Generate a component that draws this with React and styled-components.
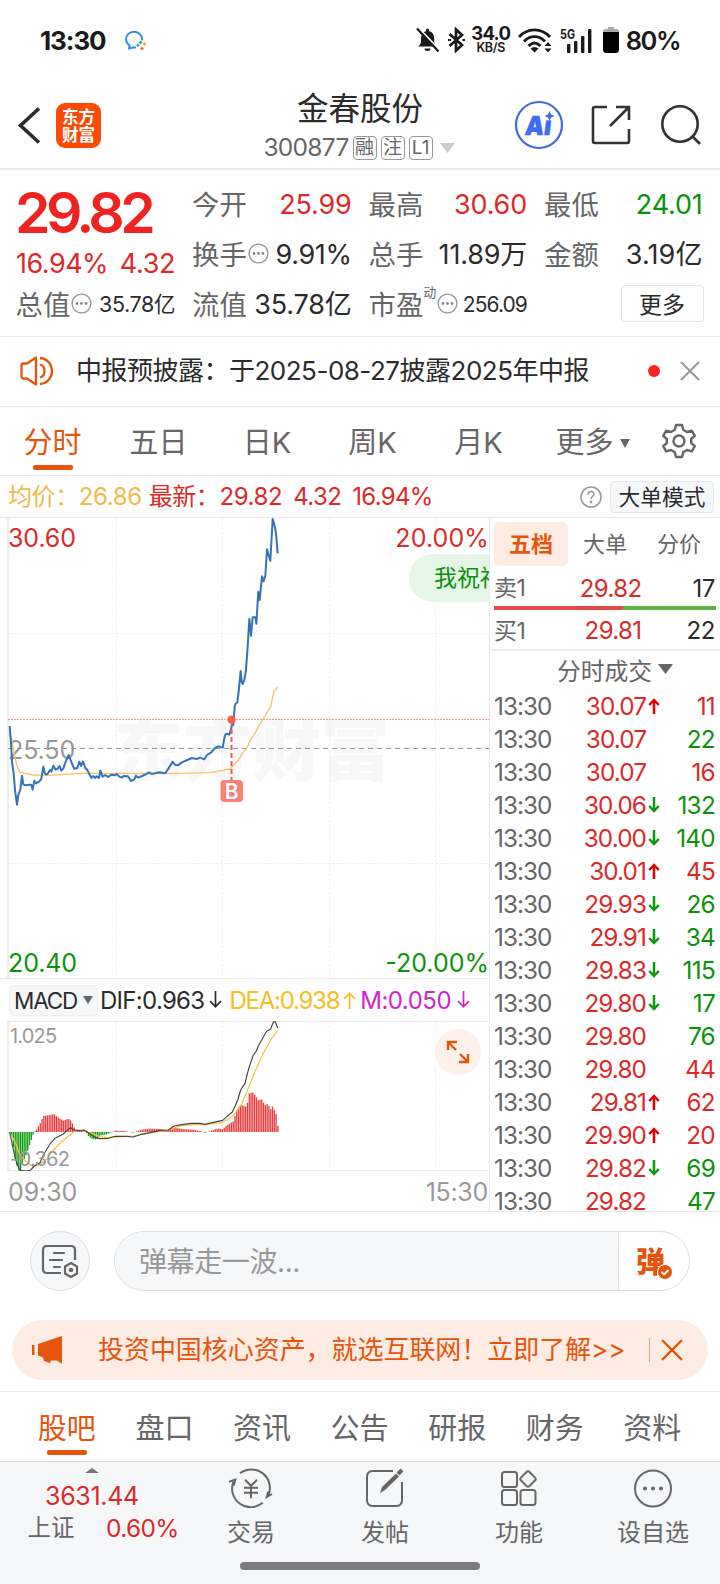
import React from 'react';
import styled, { createGlobalStyle } from 'styled-components';

const RED = '#dc2a2a';
const GREEN = '#0a930a';
const ORANGE = '#e5560c';
const GRAY = '#666';
const DARK = '#2b2b2b';
const LINE = '#e9e9e9';

const GlobalStyle = createGlobalStyle`
  * { box-sizing: border-box; }
  body {
    margin: 0;
    background: #fff;
    color: ${DARK};
    font-family: Inter, "Noto Sans CJK SC", sans-serif;
  }
`;

const Screen = styled.div`
  width: 720px;
  height: 1584px;
  overflow: hidden;
  display: flex;
  flex-direction: column;
  white-space: nowrap;
`;

const Txt = styled.span`
  font-size: ${p => p.$s || 24}px;
  line-height: ${p => p.$lh || 1.3};
  color: ${p => p.$c || 'inherit'};
  font-weight: ${p => p.$w || 400};
  letter-spacing: ${p => p.$ls || 0}px;
  margin-left: ${p => p.$ml || 0}px;
`;

/* status bar */
const StatusBar = styled.div`
  height: 81px;
  padding: 0 40px;
  display: flex;
  align-items: center;
  color: #1a1a1a;
`;
const StatusIcons = styled.div`
  margin-left: auto;
  display: flex;
  align-items: center;
`;
const Speed = styled.div`
  display: flex;
  flex-direction: column;
  align-items: center;
  width: 38px;
  margin: 0 8px 0 7px;
`;

/* header */
const Header = styled.header`
  height: 89px;
  border-bottom: 2px solid ${LINE};
  display: grid;
  grid-template-columns: 220px 280px 220px;
`;
const HeaderLeft = styled.div`
  display: flex;
  align-items: center;
  padding: 1px 0 0 17px;
  gap: 15px;
`;
const Logo = styled.div`
  width: 45px;
  height: 45px;
  border-radius: 9px;
  background: #fb4a05;
  color: #fff;
  font: 700 16.5px/18px "Noto Sans CJK SC", sans-serif;
  display: flex;
  flex-direction: column;
  align-items: center;
  justify-content: center;
`;
const HeaderTitle = styled.div`
  display: flex;
  flex-direction: column;
  align-items: center;
  padding-top: 7px;
`;
const CodeRow = styled.div`
  display: flex;
  align-items: center;
  height: 30px;
  gap: 4px;
  margin: 3px 0 0 -1px;
`;
const Tag = styled.span`
  width: 24px;
  height: 24px;
  border: 1px solid #999;
  border-radius: 4px;
  color: ${GRAY};
  font-size: 19px;
  line-height: 22px;
  text-align: center;
`;
const HeaderRight = styled.div`
  display: flex;
  align-items: center;
  padding: 1px 0 0 14px;
`;

/* quote figures */
const Quote = styled.section`
  height: 167px;
  border-bottom: 1px solid ${LINE};
  padding: 10px 17px 0 16px;
  display: grid;
  grid-template-columns: 159px 159px 158px 158px;
  column-gap: 17.5px;
  grid-template-rows: 50px 50px 50px;
`;
const BigPrice = styled.div`
  grid-row: 1 / span 2;
  display: flex;
  flex-direction: column;
`;
const Cell = styled.div`
  display: flex;
  align-items: center;
  justify-content: space-between;
`;
const Label = styled.span`
  display: inline-flex;
  align-items: center;
  color: ${GRAY};
  font-size: 27.4px;
  line-height: 40px;
  margin-left: -0.5px;
  svg { margin: 0 0 3px 1px; }
`;
const Sup = styled.sup`
  font-size: 13px;
  line-height: 14px;
  align-self: flex-start;
`;
const MoreButton = styled.button`
  margin: -3px -1px 0 auto;
  width: 83px;
  height: 37px;
  padding: 0;
  border: 1px solid #e6e6e6;
  border-radius: 4px;
  background: #fff;
  color: ${DARK};
  font: 23px/31px "Noto Sans CJK SC", sans-serif;
`;

const Notice = styled.section`
  height: 70px;
  border-bottom: 1px solid ${LINE};
  display: flex;
  align-items: center;
  padding: 0 20px 1px 19px;
`;
const Dot = styled.i`
  width: 12px;
  height: 12px;
  border-radius: 50%;
  background: #f22;
  margin: 0 20px 0 auto;
`;

/* tab bars */
const PeriodTabs = styled.nav`
  height: 69px;
  border-bottom: 1px solid ${LINE};
  display: flex;
`;
const Tab = styled.div`
  width: ${p => p.$w}px;
  padding-top: ${p => p.$top}px;
  font-size: 29px;
  line-height: 40px;
  color: ${p => (p.$on ? ORANGE : GRAY)};
  display: flex;
  flex-direction: column;
  align-items: center;
  &::after {
    content: "";
    width: 40px;
    height: 5px;
    margin-top: ${p => p.$gap}px;
    border-radius: 2px;
    background: ${p => (p.$on ? ORANGE : 'transparent')};
  }
`;
const Inline = styled.span`
  display: inline-flex;
  align-items: center;
  gap: ${p => p.$gap || 0}px;
  margin-left: ${p => p.$ml || 0}px;
`;

const InfoRow = styled.div`
  height: 42px;
  border-bottom: 1px solid ${LINE};
  display: flex;
  align-items: center;
  padding: 1px 6px 0 8px;
`;
const ModeButton = styled.button`
  width: 104px;
  height: 32px;
  margin-left: 8px;
  padding: 0;
  border: 1px solid #e6e8eb;
  border-radius: 4px;
  background: #f6f7f9;
  color: ${DARK};
  font: 21.7px/26px "Noto Sans CJK SC", sans-serif;
  padding-bottom: 3px;
`;

/* market body */
const Market = styled.main`
  height: 694px;
  border-bottom: 1px solid ${LINE};
  display: flex;
`;
const ChartColumn = styled.div`
  width: 490px;
  border-right: 1px solid ${LINE};
  display: flex;
  flex-direction: column;
`;
const ChartBox = styled.div`
  position: relative;
  height: ${p => p.$h}px;
  overflow: hidden;
  svg { display: block; }
`;
const AxisLabel = styled.span`
  position: absolute;
  ${p => p.$pos}
  color: ${p => p.$c};
  font-size: ${p => p.$s || 25}px;
  line-height: 30px;
  letter-spacing: ${p => p.$ls || 0}px;
`;
const Overlay = styled.svg`
  position: absolute;
  left: 0;
  top: 0;
`;
const Bullet = styled.div`
  position: absolute;
  left: 409px;
  top: 36px;
  width: 200px;
  height: 48px;
  border-radius: 24px;
  background: #e5f5e6;
  color: ${GREEN};
  font-size: 23px;
  line-height: 48px;
  padding-left: 25px;
`;
const Expand = styled.div`
  position: absolute;
  left: 435px;
  top: 8px;
  width: 46px;
  height: 46px;
  border-radius: 50%;
  background: #fef0ea;
  display: grid;
  place-items: center;
`;
const MacdRow = styled.div`
  height: 42px;
  display: flex;
  align-items: center;
  padding-left: 9px;
`;
const MacdButton = styled.div`
  width: 89px;
  height: 31px;
  border: 1px solid #eceef0;
  border-radius: 5px;
  background: #f6f7f9;
  display: flex;
  align-items: center;
  justify-content: center;
  gap: 6px;
  margin-right: 2px;
`;
const TimeRow = styled.div`
  display: flex;
  justify-content: space-between;
  align-items: center;
  height: 40px;
  padding: 3px 1px 0 8px;
  color: #999;
`;

const Book = styled.aside`
  flex: 1;
  display: flex;
  flex-direction: column;
  overflow: hidden;
  > * { flex: none; }
`;
const BookTabs = styled.div`
  display: flex;
  padding: 4px 3px 0 4px;
  height: 50px;
`;
const BookTab = styled.div`
  width: 74px;
  height: 44px;
  border-radius: 5px;
  text-align: center;
  font-size: 22px;
  line-height: 45px;
  color: ${p => (p.$on ? ORANGE : GRAY)};
  font-weight: ${p => (p.$on ? 700 : 400)};
  background: ${p => (p.$on ? '#feece3' : 'transparent')};
`;
const OrderRow = styled.div`
  display: grid;
  grid-template-columns: 64px 83.5px 1fr;
  height: ${p => p.$h}px;
  line-height: ${p => p.$h + 3}px;
  padding: 0 5px 0 4px;
  font-size: 24px;
  letter-spacing: -0.4px;
  > :nth-child(n+2) { text-align: right; }
`;
const Balance = styled.div`
  height: 4px;
  margin: 0 4px;
  background: linear-gradient(120deg, #e24a4a 58%, #5db53f 58%);
`;
const TradesTitle = styled.div`
  border-top: 2px solid #eee;
  height: 40.7px;
  padding: 0 0 2px 20px;
  display: flex;
  align-items: center;
  justify-content: center;
  gap: 6px;
  color: ${GRAY};
  font-size: 23.8px;
`;
const TradeRow = styled.div`
  display: grid;
  grid-template-columns: 62px 90px 16px 1fr;
  align-items: center;
  height: 32.97px;
  padding: 0 5px 0 4px;
  > :nth-child(2), > :nth-child(4) { text-align: right; }
`;

/* comment entry */
const CommentRow = styled.div`
  height: 98px;
  flex: none;
  display: flex;
  align-items: center;
  padding: 0 30px 1px;
  gap: 24px;
`;
const RoundButton = styled.div`
  width: 60px;
  height: 60px;
  border: 1px solid #dcdee2;
  border-radius: 50%;
  background: #f6f7f9;
  display: grid;
  place-items: center;
`;
const CommentPill = styled.div`
  flex: 1;
  height: 60px;
  border: 1px solid #dcdee2;
  border-radius: 30px;
  overflow: hidden;
  display: flex;
`;
const CommentInput = styled.div`
  flex: 1;
  background: #f6f7f9;
  border-right: 1px solid #dcdee2;
  padding-left: 24px;
  color: #999;
  font-size: 28px;
  line-height: 61px;
  letter-spacing: -0.4px;
`;
const BulletToggle = styled.div`
  position: relative;
  width: 70px;
  padding-left: 17px;
  color: ${ORANGE};
  font: 900 29px/56px "Noto Sans CJK SC", sans-serif;
  svg { position: absolute; left: 38px; top: 32px; }
`;
const Banner = styled.div`
  height: 60px;
  margin: 10px 12px 11px;
  border-radius: 30px;
  background: #fdece3;
  color: ${ORANGE};
  display: flex;
  align-items: center;
  padding: 0 25px 0 19px;
  flex: none;
`;
const Bar = styled.i`
  width: 1px;
  height: 24px;
  background: #eba27d;
  margin: 0 11px 0 auto;
`;
const SectionTabs = styled.nav`
  height: 71px;
  flex: none;
  border-top: 1px solid ${LINE};
  border-bottom: 1px solid #d5d9dc;
  display: flex;
  padding-left: 18px;
`;
const BottomBar = styled.footer`
  flex: 1;
  background: #f6f7f9;
  display: flex;
  flex-direction: column;
`;
const BottomItems = styled.div`
  height: 100px;
  display: flex;
`;
const IndexBox = styled.div`
  width: 184px;
  display: flex;
  flex-direction: column;
  align-items: center;
  padding-top: 6px;
`;
const IndexLine = styled.div`
  display: flex;
  justify-content: space-between;
  align-items: center;
  width: 151px;
  margin-left: 22px;
`;
const Action = styled.div`
  width: 134px;
  display: flex;
  flex-direction: column;
  align-items: center;
  gap: 8px;
  padding-top: 6px;
  color: ${GRAY};
  font-size: 24px;
  line-height: 34px;
`;
const HomeBar = styled.i`
  width: 240px;
  height: 8px;
  border-radius: 4px;
  background: #7d7d7f;
  margin: 0 auto;
`;

const Tri = ({ w = 14, h = 9, c = GRAY, up }) => (
  <svg width={w} height={h} viewBox="0 0 14 9" preserveAspectRatio="none">
    <path d={up ? 'M0 9 7 0l7 9z' : 'M0 0h14L7 9z'} fill={c} />
  </svg>
);
const Info = () => (
  <svg width="21" height="21" viewBox="0 0 21 21" fill="none" stroke="#999" strokeWidth="1.4">
    <circle cx="10.5" cy="10.5" r="9.4" />
    <g fill="#888" stroke="none">
      <circle cx="6" cy="10.5" r="1.4" /><circle cx="10.5" cy="10.5" r="1.4" /><circle cx="15" cy="10.5" r="1.4" />
    </g>
  </svg>
);
const Arrow = ({ up, c, w = 12, h = 16, sw = 2.2 }) => (
  <svg width={w} height={h} viewBox="0 0 12 16" fill="none" stroke={c} strokeWidth={sw}>
    <path d={up ? 'M6 16V2M1.2 7 6 2l4.800 5' : 'M6 0v14M1.200 9 6 14l4.800-5'} />
  </svg>
);
const Cross = ({ s = 20, c = '#999', sw = 2 }) => (
  <svg width={s} height={s} viewBox="0 0 20 20" stroke={c} strokeWidth={sw}><path d="M1 1l18 18M19 1 1 19" /></svg>
);

const PRICE = '29,648 33,700 36,755 41,790 45,840 51,884 55,855 61,838 66,797 70,823 76,826 90,824 94,824 98,839 103,812 108,820 118,814 124,806 130,770 135,792 142,793 150,780 154,785 160,767 167,779 173,776 178,768 184,782 190,775 199,750 206,735 212,750 222,776 232,774 238,755 243,768 249,754 256,774 262,780 268,792 274,803 280,798 285,804 290,799 297,804 301,782 308,800 316,795 324,801 334,794 345,796 350,792 358,800 366,803 371,798 384,799 393,813 403,808 408,797 415,803 426,798 436,794 447,787 455,792 465,790 477,787 496,790 505,776 518,755 525,764 533,766 546,757 562,750 575,744 590,747 600,743 613,748 621,735 633,728 645,714 655,709 668,713 674,680 678,671 688,674 693,657 697,643 700,645 704,590 706,582 712,577 716,545 722,483 725,515 728,522 733,510 738,480 743,410 748,326 753,377 758,322 766,322 769,341 775,245 779,270 786,199 791,214 796,197 801,118 811,153 818,27 823,43 828,70 833,130';
const AVG = '29,660 38,705 50,765 60,787 100,795 150,796 240,790 350,790 500,791 630,788 690,777 715,750 727,730 740,715 750,693 768,664 776,648 795,618 805,600 812,592 817,565 822,545 833,531';
const DIF = '29,516 38,560 50,610 60,631 80,633 92,630 103,618 120,608 130,585 150,552 165,535 190,522 205,508 212,503 222,510 240,512 252,510 265,518 285,532 300,536 325,535 345,529 380,529 400,531 420,524 450,518 480,511 505,510 522,498 545,494 575,490 600,490 615,493 640,487 668,481 678,472 697,456 706,437 713,420 722,390 735,370 741,345 748,320 760,285 768,275 775,258 788,235 800,214 812,207 820,186 826,185 833,204';
const DEA = '29,516 45,545 60,585 75,603 100,620 120,612 140,597 160,570 185,545 210,525 228,511 250,512 275,520 300,530 325,533 400,528 450,519 500,511 545,497 590,493 615,494 668,487 690,475 710,455 725,432 745,385 765,335 790,280 815,235 833,212';
const ENVELOPE = [[29, 0], [36, -15], [45, -80], [55, -115], [62, -115], [68, -90], [80, -65], [90, -35], [102, 0], [110, 8], [120, 25], [130, 48], [150, 51], [162, 54], [172, 45], [190, 34], [205, 40], [214, 33], [225, 8], [245, 4], [258, 0], [265, -12], [275, -20], [290, -23], [300, -10], [320, -7], [335, -1], [345, 4], [375, 3], [388, 0], [400, -2], [410, 2], [425, 7], [450, 10], [480, 9], [500, 6], [522, 14], [545, 9], [580, 7], [605, 2], [615, -3], [628, 2], [655, 11], [668, 8], [680, 20], [700, 32], [710, 65], [722, 82], [740, 75], [748, 117], [760, 118], [775, 95], [785, 98], [795, 80], [803, 85], [812, 68], [818, 77], [828, 55], [834, 15]];

const heightAt = x => {
  const i = Math.max(1, ENVELOPE.findIndex(p => p[0] >= x));
  const [x0, y0] = ENVELOPE[i - 1];
  const [x1, y1] = ENVELOPE[i];
  return y0 + ((y1 - y0) * (x - x0)) / (x1 - x0);
};
const BARS = Array.from({ length: 151 }, (_, i) => 29.5 + i * 5.36).map(x => [x, heightAt(Math.min(x, 834))]);

const Grid = ({ h, rows = [] }) => (
  <g stroke="#efefef" strokeDasharray="3 1.5" fill="none">
    {[116.5, 222.5, 329.5, 435.5].map(x => <path key={x} d={`M${x} 0V${h}`} />)}
    {rows.map(y => <path key={y} d={`M8 ${y}H490`} />)}
  </g>
);

const TRADES = [
  ['30.07', 'u', 11, 1], ['30.07', '', 22, 0], ['30.07', '', 16, 1], ['30.06', 'd', 132, 0],
  ['30.00', 'd', 140, 0], ['30.01', 'u', 45, 1], ['29.93', 'd', 26, 0], ['29.91', 'd', 34, 0],
  ['29.83', 'd', 115, 0], ['29.80', 'd', 17, 0], ['29.80', '', 76, 0], ['29.80', '', 44, 1],
  ['29.81', 'u', 62, 1], ['29.90', 'u', 20, 1], ['29.82', 'd', 69, 0], ['29.82', '', 47, 0],
];

const Stat = ({ label, value, c = DARK, info, s = 27, ls = -0.2 }) => (
  <Cell>
    <Label>{label}{info && <Info />}</Label>
    <Txt $s={s} $c={c} $ls={ls}>{value}</Txt>
  </Cell>
);

const icon = { fill: 'none', stroke: GRAY, strokeWidth: 2 };

export default function App() {
  return (
    <Screen>
      <GlobalStyle />
      <StatusBar>
        <Txt $s={26} $w={700} $ls={-1.1}>13:30</Txt>
        <svg width="40" height="20" viewBox="-19 0 40 20" fill="none">
          <path d="M11 16.500H8l-4 1 .600-3C2 12.500 1 10.500 1 8.500a8 7.500 0 0 1 16-.500v1.500" stroke="#2b8def" strokeWidth="1.900" />
          <path d="M14.500 10.500l2 2" stroke="#1fb45a" strokeWidth="2.600" />
          <path d="M20.500 12l-2 2" stroke="#f4b400" strokeWidth="2.600" />
          <path d="M18 16.500l-2 2" stroke="#f26a3d" strokeWidth="2.600" />
          <path d="M12 15l2-1.500" stroke="#2b8def" strokeWidth="2.400" />
        </svg>
        <StatusIcons>
          <svg width="24" height="26" viewBox="0 0 24 26" fill="#1a1a1a">
            <path d="M2 19.500c3-2 3-4 3-8 0-4 2-6.500 5-7.200V3a1.600 1.600 0 0 1 3.200 0v1.300c3 .700 5 3.200 5 7.200 0 4 0 6 3 8zM8.500 21.500h6a3 2.500 0 0 1-6 0z" />
            <path d="M2.500 1 24.500 24" stroke="#fff" strokeWidth="2" /><path d="M1 1.500 22.500 24.500" stroke="#1a1a1a" strokeWidth="2.200" />
          </svg>
          <svg width="25" height="26" viewBox="-8 0 25 26" fill="none" stroke="#1a1a1a" strokeWidth="2.700">
            <path d="M1.500 7 14 18 8 23.500V2.500L14 8 1.500 19" /><path d="M0 13h3M14.500 13h2.500" strokeWidth="2.200" />
          </svg>
          <Speed>
            <Txt $s={18.5} $w={700} $lh="15px" $ls={-0.8}>34.0</Txt>
            <Txt $s={12.5} $w={600} $lh="13px" $ls={-0.3}>KB/S</Txt>
          </Speed>
          <svg width="35" height="25" viewBox="0 0 35 25" fill="none" stroke="#1a1a1a" strokeWidth="2.900">
            <path d="M1 9c8.500-9.500 22.500-9.500 31 0M6 13.500c6-6.500 15-6.500 21 0M10.500 18c4-4 8-4 12 0" />
            <path d="M12.500 20.500q4-3 8 0l-4 4z" fill="#1a1a1a" stroke="none" />
            <path d="M30 14l3.500 4h-7zM30 24.500l3.500-4h-7z" fill="#1a1a1a" stroke="none" />
          </svg>
          <svg width="39" height="28" viewBox="-7 -2 39 28" fill="#1a1a1a">
            <text x="0" y="10.500" fontSize="13" fontWeight="700" textLength="15" lengthAdjust="spacingAndGlyphs">5G</text>
            <rect x="7" y="16" width="3.400" height="9" rx="1" /><rect x="14" y="13" width="3.400" height="12" rx="1" />
            <rect x="21" y="8" width="3.400" height="17" rx="1" /><rect x="28" y="1" width="3.400" height="24" rx="1" />
          </svg>
          <svg width="34" height="26" viewBox="-11 0 34 26">
            <path d="M5 0h6v2h2.500q2.500 0 2.500 2.500V6H0V4.500Q0 2 2.500 2H5z" fill="#aaa" />
            <path d="M0 5h16v17.500a3.500 3.500 0 0 1-3.500 3.500h-9A3.500 3.500 0 0 1 0 22.500z" fill="#000" />
          </svg>
          <Txt $s={25.5} $w={600} $ls={-1.5}>80%</Txt>
        </StatusIcons>
      </StatusBar>

      <Header>
        <HeaderLeft>
          <svg width="24" height="37" viewBox="0 0 24 37" fill="none" stroke={DARK} strokeWidth="3.600"><path d="M22 1.500 3.500 18.500 22 35.500" /></svg>
          <Logo><span>东方</span><span>财富</span></Logo>
        </HeaderLeft>
        <HeaderTitle>
          <Txt $s={31.5} $lh="42px">金春股份</Txt>
          <CodeRow>
            <Txt $s={24.5} $c={GRAY} $ls={-0.7}>300877</Txt>
            <Tag>融</Tag><Tag>注</Tag><Tag>L1</Tag>
            <svg width="19" height="10" viewBox="-2 0 19 10"><path d="M1 0h15L8.500 10z" fill="#ccc" /></svg>
          </CodeRow>
        </HeaderTitle>
        <HeaderRight>
          <svg width="50" height="50" viewBox="0 0 50 50" fill="#3d6bf5">
            <circle cx="25" cy="25" r="23" fill="none" stroke="#4169e1" strokeWidth="2.200" />
            <text x="14.500" y="35" fontSize="26" fontWeight="900" textLength="26" lengthAdjust="spacingAndGlyphs" transform="skewX(-7)" stroke="#3d6bf5" strokeWidth=".6">Ai</text>
            <rect x="30" y="12" width="11" height="8" fill="#fff" />
            <path d="M35.500 11l1.600 3.400 3.400 1.600-3.400 1.600-1.600 3.400-1.600-3.400-3.400-1.600 3.400-1.600z" />
          </svg>
          <svg width="67" height="40" viewBox="-27 0 67 40" fill="none" stroke="#333" strokeWidth="2.600">
            <path d="M16 2H4Q2 2 2 4v32q0 2 2 2h32q2 0 2-2V24" /><path d="M25 2h13v13M38 2 19 21" />
          </svg>
          <svg width="70" height="42" viewBox="-29 0 70 42" fill="none" stroke="#333" strokeWidth="2.600">
            <circle cx="20" cy="20" r="17.700" /><path d="M32.500 32.500 40 40" />
          </svg>
        </HeaderRight>
      </Header>

      <Quote>
        <BigPrice>
          <Txt $s={57} $w={600} $c="#f02323" $lh="66px" $ls={-4.6} $ml={-1}>29.82</Txt>
          <Cell><Txt $s={27} $c={RED} $ls={-0.5}>16.94%</Txt><Txt $s={27} $c={RED} $ls={-0.4}>4.32</Txt></Cell>
        </BigPrice>
        <Stat label="今开" value="25.99" c={RED} />
        <Stat label="最高" value="30.60" c={RED} />
        <Stat label="最低" value="24.01" c={GREEN} />
        <Stat label="换手" value="9.91%" info ls={-0.4} />
        <Stat label="总手" value="11.89万" />
        <Stat label="金额" value="3.19亿" ls={0.1} />
        <Stat label="总值" value="35.78亿" info s={21.5} ls={-0.4} />
        <Stat label="流值" value="35.78亿" />
        <Cell>
          <Label>市盈<Sup>动</Sup><Info /></Label>
          <Txt $s={21} $ls={-0.9}>256.09</Txt>
        </Cell>
        <Cell><MoreButton>更多</MoreButton></Cell>
      </Quote>

      <Notice>
        <svg width="36" height="30" viewBox="-1 0 36 30" fill="none" stroke={ORANGE} strokeWidth="2.300">
          <path d="M16 1.500v27l-9-6H3.500q-2 0-2-2v-11q0-2 2-2H7z" strokeLinejoin="round" />
          <path d="M20 8.500c6 1.500 6 11.500 0 13M20 2c16 1.500 16 24.500 0 26" />
        </svg>
        <Txt $s={26} $ls={-0.5} $ml={21}>中报预披露：于2025-08-27披露2025年中报</Txt>
        <Dot />
        <Cross />
      </Notice>

      <PeriodTabs>
        <Tab $on $w={105} $top={16} $gap={2}>分时</Tab>
        <Tab $w={107} $top={16} $gap={2}>五日</Tab>
        <Tab $w={110} $top={16} $gap={2}>日K</Tab>
        <Tab $w={101} $top={16} $gap={2}>周K</Tab>
        <Tab $w={111} $top={16} $gap={2}>月K</Tab>
        <Tab $w={117} $top={16} $gap={2}><Inline $gap={6}>更多<Tri w={10} h={9} /></Inline></Tab>
        <svg width="46" height="52" viewBox="-10 -16 46 52" {...icon} strokeWidth="2.400">
          <path d="M15 2h6l1.200 4.800 3.800 2.200 4.800-1.400 3 5.200-3.600 3.200v4l3.600 3.200-3 5.200-4.800-1.400-3.800 2.200L21 34h-6l-1.200-4.800L10 27l-4.800 1.400-3-5.200L5.800 20v-4l-3.600-3.200 3-5.200L10 9l3.800-2.200z" strokeLinejoin="round" />
          <circle cx="18" cy="18" r="5.500" />
        </svg>
      </PeriodTabs>

      <InfoRow>
        <Txt $s={24} $c="#f0b94b" $ls={-0.4}>均价：26.86</Txt>
        <Txt $s={24} $c={RED} $ls={-0.4} $ml={7}>最新：29.82</Txt>
        <Txt $s={24} $c={RED} $ls={-0.6} $ml={11}>4.32</Txt>
        <Txt $s={24} $c={RED} $ls={-0.7} $ml={11}>16.94%</Txt>
        <Inline style={{ marginLeft: 'auto' }}>
          <svg width="22" height="22" viewBox="0 0 22 22" fill="none" stroke="#999" strokeWidth="1.600">
            <circle cx="11" cy="11" r="10" /><path d="M8 8.500c0-4 6-4 6-.500 0 2.500-3 2.500-3 5" /><circle cx="11" cy="16" r=".6" />
          </svg>
          <ModeButton>大单模式</ModeButton>
        </Inline>
      </InfoRow>

      <Market>
        <ChartColumn>
          <ChartBox $h={462}>
            <svg width="489" height="462" viewBox="0 0 489 462">
              <text x="114" y="257" fontSize="69" fontWeight="900" fill="#f7f7f7" fontFamily="Noto Sans CJK SC">东方财富</text>
              <Grid h={460} rows={[115.5, 345.5]} />
              <path d="M8 0V460" stroke="#eee" strokeWidth="2" />
              <path d="M8 201.500H490" stroke="#f0a27c" strokeDasharray="2 1" />
              <path d="M8 230.500H490" stroke="#999" strokeDasharray="5 4" />
              <path d="M0 461H490" stroke={LINE} strokeWidth="2" />
            </svg>
            <AxisLabel $pos="left:8px;top:5px;" $c={RED} $ls={-0.1}>30.60</AxisLabel>
            <AxisLabel $pos="right:0;top:5px;" $c={RED} $ls={0.1}>20.00%</AxisLabel>
            <AxisLabel $pos="left:8px;top:217px;" $c="#999" $ls={-0.1}>25.50</AxisLabel>
            <AxisLabel $pos="left:8px;bottom:1px;" $c={GREEN} $ls={-0.1}>20.40</AxisLabel>
            <AxisLabel $pos="right:0;bottom:1px;" $c={GREEN} $ls={0}>-20.00%</AxisLabel>
            <Overlay width="489" height="462">
              <g transform="translate(0 -8) scale(.33333)" fill="none" strokeLinejoin="round">
                <polyline points={AVG} stroke="#f5c462" strokeWidth="4" />
                <polyline points={PRICE} stroke="#3573b9" strokeWidth="6" />
              </g>
              <path d="M231.500 203V262" stroke="#e8605a" strokeWidth="2" strokeDasharray="5 3" />
              <circle cx="231.500" cy="201.500" r="4" fill="#f4604c" />
              <rect x="220.500" y="262" width="22.500" height="22" rx="4" fill="#fa8072" />
              <text x="231.700" y="280.500" fontSize="21" fontWeight="600" fill="#fff" textAnchor="middle">B</text>
            </Overlay>
            <Bullet>我祝福</Bullet>
          </ChartBox>
          <MacdRow>
            <MacdButton><Txt $s={22.5} $ls={-1.2}>MACD</Txt><Tri w={10} h={8} /></MacdButton>
            <Inline $gap={4}><Txt $s={24} $ls={-0.7}>DIF:0.963</Txt><Arrow c={DARK} w={15} h={18} sw={1.5} /></Inline>
            <Inline $gap={3} $ml={6}><Txt $s={24} $ls={-1.25} $c="#f3c022">DEA:0.938</Txt><Arrow up c="#f3c022" w={15} h={18} sw={1.5} /></Inline>
            <Inline $gap={5} $ml={3}><Txt $s={24} $ls={-0.5} $c="#cf25cf">M:0.050</Txt><Arrow c="#cf25cf" w={15} h={18} sw={1.5} /></Inline>
          </MacdRow>
          <ChartBox $h={150}>
            <svg width="489" height="151" viewBox="0 0 489 151">
              <Grid h={150} />
              <path d="M8 0V150" stroke="#eee" strokeWidth="2" />
              <path d="M8 .5H490M8 149.500H490" stroke={LINE} />
              <g transform="translate(0 -61) scale(.33333)" fill="none" strokeLinejoin="round">
                {BARS.map(([x, v]) => (
                  <rect key={x} x={x - 1.9} width="4" y={v > 0 ? 516 - v : 516} height={Math.abs(v)} fill={v > 0 ? '#ea3c3c' : '#0c9c0c'} />
                ))}
                <polyline points={DEA} stroke="#f3c33a" strokeWidth="3.600" />
                <polyline points={DIF} stroke="#444" strokeWidth="3.400" />
              </g>
            </svg>
            <AxisLabel $pos="left:10px;top:0;" $c="#999" $s={20} $ls={-0.8}>1.025</AxisLabel>
            <AxisLabel $pos="left:10px;bottom:-3px;" $c="#999" $s={20} $ls={-0.7}>-0.362</AxisLabel>
            <Expand>
              <svg width="24" height="24" viewBox="0 0 24 24" fill="none" stroke={ORANGE} strokeWidth="2.400">
                <path d="M2 10V2h9M2 2l8 8M22 14v8h-9M22 22l-8-8" />
              </svg>
            </Expand>
          </ChartBox>
          <TimeRow><Txt $s={25} $ls={-0.1}>09:30</Txt><Txt $s={25} $ls={-0.3}>15:30</Txt></TimeRow>
        </ChartColumn>

        <Book>
          <BookTabs><BookTab $on>五档</BookTab><BookTab>大单</BookTab><BookTab>分价</BookTab></BookTabs>
          <OrderRow $h={38}><Txt $s={23} $lh="inherit" $c={GRAY} $ls={-0.4}>卖1</Txt><Txt $lh="inherit" $ls={-0.6} $c={RED}>29.82</Txt><span>17</span></OrderRow>
          <Balance />
          <OrderRow $h={39}><Txt $s={23} $lh="inherit" $c={GRAY} $ls={-0.4}>买1</Txt><Txt $lh="inherit" $ls={-0.6} $c={RED}>29.81</Txt><span>22</span></OrderRow>
          <TradesTitle>分时成交<Tri w={15} h={10} /></TradesTitle>
          {TRADES.map(([price, dir, vol, buy], i) => (
            <TradeRow key={i}>
              <Txt $s={24.3} $lh="24px" $c={GRAY} $ls={-1}>13:30</Txt>
              <Txt $s={24.3} $lh="24px" $c={RED} $ls={-0.9}>{price}</Txt>
              <Inline $ml={2}>{dir && <Arrow up={dir === 'u'} c={dir === 'u' ? '#e00000' : '#0a9a0a'} sw={2.5} />}</Inline>
              <Txt $s={24.3} $lh="24px" $c={buy ? RED : GREEN} $ls={-0.7}>{vol}</Txt>
            </TradeRow>
          ))}
        </Book>
      </Market>

      <CommentRow>
        <RoundButton>
          <svg width="38" height="34" viewBox="0 0 38 34" fill="none" stroke={GRAY} strokeWidth="2.200">
            <path d="M20 29H6q-4 0-4-4V6q0-4 4-4h24q4 0 4 4v10" />
            <path d="M13 9h10M9 16h12M13 23h6" strokeLinecap="round" />
            <path d="M30 19l6 3.500v7L30 33l-6-3.500v-7z" strokeLinejoin="round" /><circle cx="30" cy="26" r="1.200" />
          </svg>
        </RoundButton>
        <CommentPill>
          <CommentInput>弹幕走一波...</CommentInput>
          <BulletToggle>弹
            <svg width="16" height="16" viewBox="0 0 16 16"><circle cx="8" cy="8" r="7.500" fill={ORANGE} stroke="#fff" /><path d="M4.500 8l2.500 2.500L11.500 6" fill="none" stroke="#fff" strokeWidth="1.800" /></svg>
          </BulletToggle>
        </CommentPill>
      </CommentRow>

      <Banner>
        <svg width="32" height="28" viewBox="0 0 32 28" fill={ORANGE}>
          <path d="M1 9h2.500v10H1zM7 8 31 0v28l-5-3.500h-6l-1 2.500-6-2-1-3.500-5-2z" />
        </svg>
        <Txt $s={26} $ls={-0.05} $ml={35}>投资中国核心资产，就选互联网！立即了解&gt;&gt;</Txt>
        <Bar />
        <Cross c={ORANGE} s={22} />
      </Banner>

      <SectionTabs>
        {['股吧', '盘口', '资讯', '公告', '研报', '财务', '资料'].map((t, i) => (
          <Tab key={t} $on={i === 0} $w={97.6} $top={17} $gap={1}>{t}</Tab>
        ))}
      </SectionTabs>

      <BottomBar>
        <BottomItems>
          <IndexBox>
            <Tri w={14} h={5} up c="#777" />
            <Txt $s={25} $c={RED} $ls={-0.3} style={{ marginTop: 7 }}>3631.44</Txt>
            <IndexLine><Txt $s={23.5} $c={GRAY}>上证</Txt><Txt $s={24.5} $c={RED} $ls={-0.7}>0.60%</Txt></IndexLine>
          </IndexBox>
          <Action>
            <svg width="44" height="40" viewBox="0 1.500 44 40" {...icon}>
              <path d="M11 6.700A18.600 18.600 0 0 1 39.300 29M33.700 36.300A18.600 18.600 0 0 1 4.300 15.500M0 15.300l6.300-2.300-1.500 6M43 27.500l-5.300 3 1.500-5.500" />
              <path d="M16 13.300l6 6 6-6M22 19v12.700M15 21.300h14M15 26.300h14" />
            </svg>交易
          </Action>
          <Action>
            <svg width="40" height="40" viewBox="0 0 40 40" {...icon}>
              <path d="M28 3H8q-6 0-6 6v23q0 6 6 6h23q6 0 6-6V14" />
              <path d="M15 25l2-6L31 5.500l3 3L20 22z" fill={GRAY} stroke="none" /><path d="M33 6l4-4" strokeWidth="4" />
            </svg>发帖
          </Action>
          <Action>
            <svg width="38" height="40" viewBox="0 0 38 40" {...icon}>
              <rect x="2" y="4" width="15" height="15" rx="2.500" /><rect x="2" y="22" width="15" height="15" rx="2.500" /><rect x="20.500" y="22" width="15" height="15" rx="2.500" />
              <rect x="22" y="5" width="12" height="12" rx="2" transform="rotate(45 28 11)" />
            </svg>功能
          </Action>
          <Action>
            <svg width="40" height="40" viewBox="0 0 40 40" {...icon}>
              <circle cx="20" cy="20.500" r="18" />
              <g fill={GRAY} stroke="none"><circle cx="12" cy="20.500" r="2" /><circle cx="20" cy="20.500" r="2" /><circle cx="28" cy="20.500" r="2" /></g>
            </svg>设自选
          </Action>
        </BottomItems>
        <HomeBar />
      </BottomBar>
    </Screen>
  );
}
